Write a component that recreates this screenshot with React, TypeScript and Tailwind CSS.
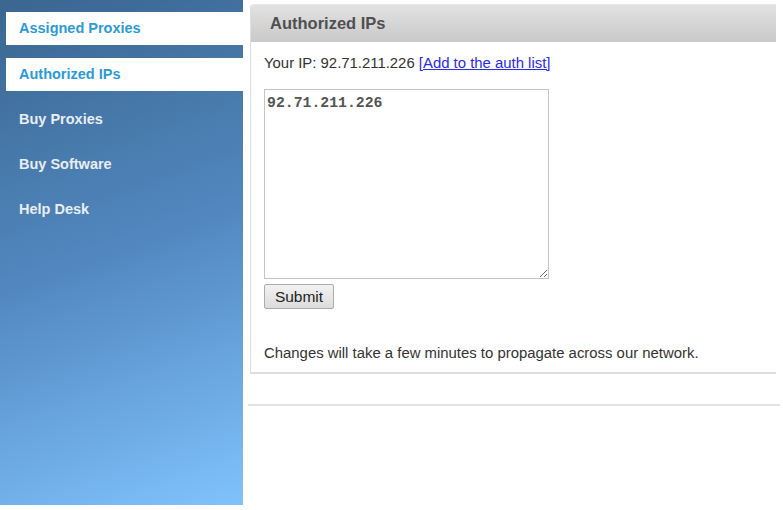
const FONT = { fontFamily: '"Liberation Sans", Arial, sans-serif' };

const menu = [
  { label: "Assigned Proxies", active: true },
  { label: "Authorized IPs", active: true },
  { label: "Buy Proxies", active: false },
  { label: "Buy Software", active: false },
  { label: "Help Desk", active: false },
];

function Sidebar() {
  return (
    <aside className="flex h-[505px] w-[243px] shrink-0 flex-col gap-[13px] bg-linear-[160deg] from-[#3a6690] via-[#5288c0] to-[#80c2fd] pt-[12px] pl-[6px]">
      {menu.map((item) =>
        item.active ? (
          <div
            key={item.label}
            className="flex h-[33px] items-center bg-white pl-[13px] text-[14.5px] font-bold text-[#2b9ad6]"
          >
            {item.label}
          </div>
        ) : (
          <div
            key={item.label}
            className="flex h-[32px] items-center pl-[13px] text-[14.5px] font-bold text-[#e9eef4]"
          >
            {item.label}
          </div>
        ),
      )}
    </aside>
  );
}

export default function App() {
  return (
    <div className="flex h-[510px] w-[783px] bg-white" style={FONT}>
      <Sidebar />
      <main className="flex flex-1 flex-col pt-[4px] pl-[7px] pr-[3px]">
        <section className="w-[526px] rounded-tl-[4px] border-b-2 border-l border-[#dedede]">
          <div className="flex h-[38px] items-center rounded-tl-[4px] border-t border-[#e8e8e8] bg-linear-to-b from-[#e2e2e2] to-[#c9c9c9] pl-[19px] text-[16.5px] font-bold text-[#505050]">
            Authorized IPs
          </div>
          <div className="flex flex-col pl-[13px] pb-[10px]">
            <p className="mt-[12px] text-[14.9px] leading-[18px] text-[#333]">
              Your IP: 92.71.211.226{" "}
              <a href="#" className="text-[#2a2aee] underline">
                [Add to the auth list]
              </a>
            </p>
            <textarea
              defaultValue="92.71.211.226"
              className="mt-[17px] h-[190px] w-[285px] border border-[#c4c4c4] px-[2px] py-[4px] text-[14.8px] leading-[18px] text-[#555] outline-none"
              style={{ fontFamily: '"Liberation Mono", "Courier New", monospace', fontWeight: 700 }}
            />
            <button className="mt-[5px] h-[25px] w-[70px] rounded-[2px] border border-[#acacac] bg-linear-to-b from-[#f2f2f2] to-[#dcdcdc] text-[15.5px] text-[#222]">
              Submit
            </button>
            <p className="mt-[35px] text-[14.9px] leading-[18px] text-[#333]">
              Changes will take a few minutes to propagate across our network.
            </p>
          </div>
        </section>
        <div className="mt-[30px] -ml-[2px] h-[2px] w-[532px] bg-[#e2e2e2]" />
      </main>
    </div>
  );
}
